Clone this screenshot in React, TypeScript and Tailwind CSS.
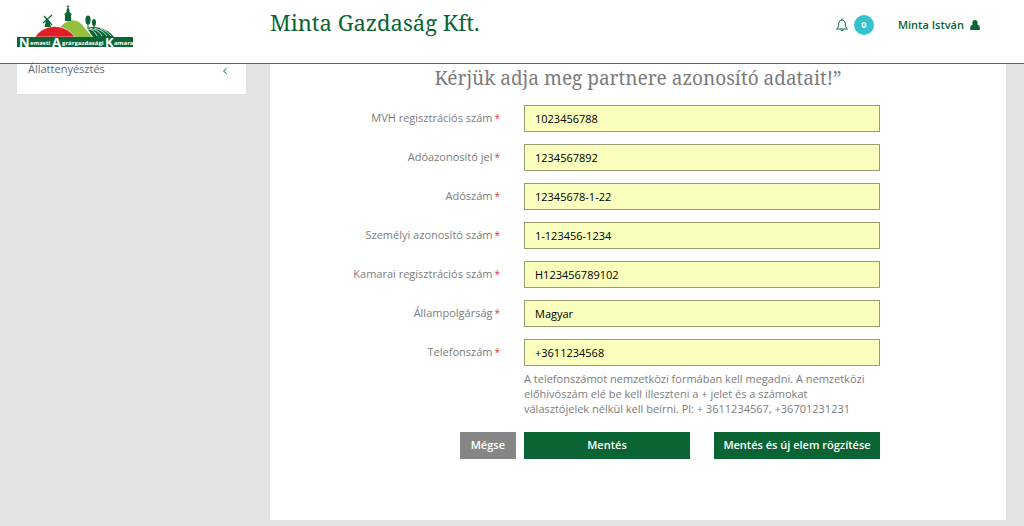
import { useState } from 'react'

const fields = [
  { id: 'mvh', label: 'MVH regisztrációs szám', value: '1023456788' },
  { id: 'tax-id', label: 'Adóazonosító jel', value: '1234567892' },
  { id: 'tax-number', label: 'Adószám', value: '12345678-1-22' },
  { id: 'personal-id', label: 'Személyi azonosító szám', value: '1-123456-1234' },
  { id: 'chamber', label: 'Kamarai regisztrációs szám', value: 'H123456789102' },
  { id: 'citizenship', label: 'Állampolgárság', value: 'Magyar' },
  { id: 'phone', label: 'Telefonszám', value: '+3611234568' },
]

export default function App() {
  return (
    <div className="min-h-screen bg-[#e3e3e3] font-['Open_Sans',sans-serif] text-[11px] text-[#7c7c7c]">
      <Header />
      <div className="flex items-start gap-6 pr-[18px] pb-1.5 pl-[17px]">
        <Sidebar />
        <main className="min-w-0 flex-1 bg-white pb-[61px]">
          <h2 className="pt-0.5 text-center font-['Noto_Serif','DejaVu_Serif',serif] text-[19px] leading-6">
            Kérjük adja meg partnere azonosító adatait!”
          </h2>
          <PartnerForm />
        </main>
      </div>
    </div>
  )
}

function Header() {
  return (
    <header className="flex h-16 items-start border-b border-[#2f7a62] bg-white pr-11 pl-[17px] text-[#0a6434]">
      <a href="#" aria-label="Nemzeti Agrárgazdasági Kamara" className="w-[253px] shrink-0 pt-1">
        <Logo />
      </a>
      <h1 className="flex-1 pt-2 font-['Noto_Serif','DejaVu_Serif',serif] text-[22px] leading-7">Minta Gazdaság Kft.</h1>
      <div className="flex h-[50px] items-center">
        <button type="button" aria-label="Értesítések" className="flex items-center gap-1.5">
          <BellIcon />
          <span className="flex size-5 items-center justify-center rounded-full bg-[#36c1cd] text-[9px] font-bold text-white">
            0
          </span>
        </button>
        <a href="#" className="ml-6 flex items-center gap-1.5 font-semibold">
          Minta István
          <UserIcon />
        </a>
      </div>
    </header>
  )
}

function Sidebar() {
  return (
    <nav className="w-[229px] shrink-0 bg-white pb-5">
      <a href="#" className="flex h-2.5 items-center justify-between pr-[18px] pl-[11px] text-[#666b74]">
        Állattenyésztés
        <svg className="mt-1 h-2 w-1.5" viewBox="0 0 6 8" fill="none" stroke="#0a6434">
          <path d="M4.800 1 1.500 4l3.300 3" />
        </svg>
      </a>
    </nav>
  )
}

function PartnerForm() {
  const [values, setValues] = useState<Record<string, string>>(
    Object.fromEntries(fields.map((field) => [field.id, field.value])),
  )

  return (
    <form className="pt-[15px] pr-[126px]" onSubmit={(e) => e.preventDefault()}>
      <div className="space-y-3">
        {fields.map((field) => (
          <div key={field.id} className="grid grid-cols-[230px_1fr] items-center gap-6">
            <label htmlFor={field.id} className="text-right">
              {field.label}
              <span className="ml-0.5 text-[10px] text-[#dc3545]">*</span>
            </label>
            <input
              id={field.id}
              type="text"
              value={values[field.id]}
              onChange={(e) => setValues({ ...values, [field.id]: e.target.value })}
              className="h-[27px] w-full border border-[#9c9c72] bg-[#faffbd] px-2.5 text-black"
            />
          </div>
        ))}
      </div>
      <p className="pt-[5px] pr-2 pl-[254px] leading-[15px]">
        A telefonszámot nemzetközi formában kell megadni. A nemzetközi előhívószám elé be kell illeszteni a + jelet és a
        számokat választójelek nélkül kell beírni. Pl: + 3611234567, +36701231231
      </p>
      <div className="mt-4 grid grid-cols-[246px_1fr] gap-2 font-semibold text-white">
        <button type="button" className="h-[27px] justify-self-end bg-[#868686] px-[11px]">
          Mégse
        </button>
        <div className="grid grid-cols-2 gap-6">
          <button type="submit" className="h-[27px] bg-[#0a6434]">
            Mentés
          </button>
          <button type="submit" className="h-[27px] bg-[#0a6434] whitespace-nowrap">
            Mentés és új elem rögzítése
          </button>
        </div>
      </div>
    </form>
  )
}

function BellIcon() {
  return (
    <svg className="h-3.5 w-3" viewBox="0 0 12 14" fill="none" stroke="#0a6434">
      <path d="M6 .5v1.300M.5 11h11C9.800 9.600 9.400 8.500 9.300 6 9.200 3.500 7.800 2 6 2S2.800 3.500 2.700 6C2.600 8.500 2.200 9.600.5 11Z" />
      <path d="M4.800 11.500c0 1.800 2.400 1.800 2.400 0" />
    </svg>
  )
}

function UserIcon() {
  return (
    <svg className="h-2.5 w-2.5" viewBox="0 0 10 10" fill="#0a6434">
      <ellipse cx="5" cy="3" rx="2.600" ry="3" />
      <path d="M.2 10V8c0-1.600 1-2.900 2.600-3.400 1.200 1.200 3.200 1.200 4.400 0C8.800 5.100 9.800 6.400 9.800 8v2Z" />
    </svg>
  )
}

function Logo() {
  return (
    <svg className="h-12 w-[118px]" viewBox="0 0 118 48">
      {/* hills */}
      <path d="M43 24C50 14 61 14 67 23c3 4 5 6 8 10H50Z" fill="#93c13d" />
      <path d="M18 33C27 19 48 19 58 33Z" fill="#df1f26" stroke="#fff" strokeWidth=".6" />
      <path d="M70 24c9-3 21 1 27 9H76Z" fill="#0a6434" />
      <path
        d="M70 25c6 0 8 3 10 7M73 24.500c7 1 10 4 12 7.500M77 24c7 2 10 4 13 8M83 24.500c5 2 8 4 11 7.500"
        fill="none"
        stroke="#fff"
        strokeWidth=".8"
      />
      {/* windmill */}
      <path d="m29 16-1.500 7h6.500L32 16Z" fill="#0a6434" />
      <path d="m27 12 8 9M35 11l-9 8" stroke="#0a6434" strokeWidth="1.200" />
      {/* church tower */}
      <path d="M51 1v4M49.500 2.500h3" stroke="#0a6434" strokeWidth=".7" />
      <path d="m51 3 1.500 3v2l2 2v1h-.5v6h-6v-6h-.5v-1l2-2V6Z" fill="#0a6434" />
      {/* trees */}
      <path d="M71 18v6.500M77 20v5" stroke="#0a6434" />
      <ellipse cx="71" cy="16" rx="2.600" ry="4.500" fill="#0a6434" />
      <ellipse cx="77" cy="18.500" rx="2" ry="3.500" fill="#0a6434" />
      {/* name banner */}
      <path d="M0 33h116v10H0Z" fill="#0a6434" />
      <g fill="#fff" fontFamily="Open Sans, sans-serif" fontWeight="700">
        <text x="2" y="43" fontSize="13">N</text>
        <text x="13" y="41" fontSize="6">emzeti</text>
        <text x="35" y="43" fontSize="13">A</text>
        <text x="45" y="41" fontSize="6">grárgazdasági</text>
        <text x="88" y="43" fontSize="13">K</text>
        <text x="97" y="41" fontSize="6">amara</text>
      </g>
    </svg>
  )
}
